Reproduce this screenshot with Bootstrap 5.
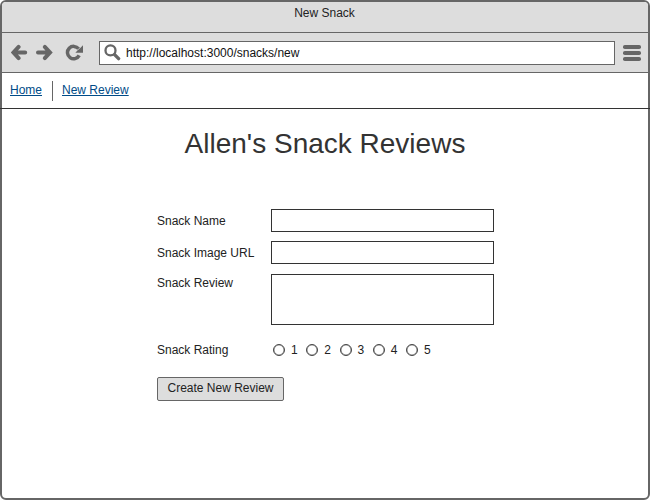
<!DOCTYPE html>
<html lang="en">
<head>
<meta charset="utf-8">
<meta name="viewport" content="width=device-width, initial-scale=1">
<title>New Snack</title>
<link href="https://cdn.jsdelivr.net/npm/bootstrap@5.3.0/dist/css/bootstrap.min.css" rel="stylesheet">
<style>
body{font-family:"Liberation Sans",Arial,sans-serif;font-size:12px;line-height:14px;color:#222;background:#fff}
.window{width:650px;height:500px;border:2px solid #666;border-radius:6px}
.titlebar{height:31px;padding:4px 1px 0 0;background:#ddd;border-bottom:1px solid #666;border-radius:4px 4px 0 0}
.toolbar{height:40px;background:#ddd;border-bottom:1px solid #666;padding:0 7.5px 0 9px}
.toolbar svg{display:block;flex:none}
.reload{margin-left:12px}
.address{width:516px;height:24px;border:1px solid #666;background:#fff;margin-left:16px;padding-left:4px}
.address input{font-size:12px;line-height:14px;color:#111;margin-left:5px;outline:0}
.site-nav{height:36px;border-bottom:1px solid #333;margin:0 -2px;padding:0 10px}
.site-nav a{color:#004b87;text-decoration:underline;text-underline-offset:1px;text-decoration-thickness:1px;margin-bottom:2px}
.divider{width:1px;height:20px;background:#666;margin:0 9px 0 10px}
h1{font-size:28px;line-height:32px;font-weight:400;margin:19px 0 0;color:#333}
.review-form{width:337px;margin:49px 0 0 155px}
.field{display:grid;grid-template-columns:114px 223px}
.field .form-control{height:23px;min-height:0;border:1px solid #333;border-radius:0;padding:2px 4px;font-size:12px;resize:none}
.field textarea.form-control{height:51px}
.field + .field{margin-top:9px}
.field.review-row{margin-top:10px}
.field.rating-row{margin-top:18px}
.review-row label{padding-top:2px}
.rating label{width:33.25px;padding-left:2px}
.rating input{appearance:none;width:12px;height:12px;margin:0 6px 0 0;border:1px solid #444;border-radius:50%;background:#fff;box-shadow:inset 0 0 0 .3px #444}
.rating input:checked{background:#444;box-shadow:inset 0 0 0 2px #fff}
.create{width:127px;height:24px;background:#ddd;border:1px solid #666;border-radius:2px;padding:0 0 2px;font-size:12px;line-height:14px;color:#222;margin-top:20px}
</style>
<script src="https://cdn.jsdelivr.net/npm/bootstrap@5.3.0/dist/js/bootstrap.bundle.min.js"></script>
</head>
<body>
<div class="window bg-white">
  <div class="titlebar text-center">New Snack</div>
  <div class="toolbar d-flex align-items-center">
    <svg width="17" height="17" viewBox="0 0 17 17" fill="none" stroke="#666" stroke-width="4" stroke-linecap="round"><path d="M7.6 2.9 2.4 8.5l5.2 5.6M3.5 8.5h10.7"/></svg>
    <svg class="ms-2" width="17" height="17" viewBox="0 0 17 17" fill="none" stroke="#666" stroke-width="4" stroke-linecap="round"><path d="m8.8 2.9 5.2 5.6-5.2 5.6M13 8.5H2"/></svg>
    <svg class="reload" width="18" height="17" viewBox="0 0 18 17"><path d="M13.6 4.8A6.2 6.2 0 1 0 14.2 11.4" fill="none" stroke="#666" stroke-width="3.5"/><path d="M18 1.2v7.5h-7.6l2-2.3 2.6-2.2z" fill="#666"/></svg>
    <div class="address d-flex align-items-center">
      <svg width="17" height="17" viewBox="0 0 17 17" fill="none" stroke="#666"><circle cx="6.5" cy="6.4" r="5" stroke-width="2.3"/><path d="m10.6 10.6 4 4" stroke-width="3.4" stroke-linecap="round"/></svg>
      <input class="border-0 p-0 flex-grow-1 bg-transparent" type="text" value="http://localhost:3000/snacks/new" aria-label="Address">
    </div>
    <svg class="ms-auto" width="18" height="16" viewBox="0 0 18 16" fill="#666"><rect width="18" height="4" rx="1.8"/><rect y="6" width="18" height="4" rx="1.8"/><rect y="12" width="18" height="4" rx="1.8"/></svg>
  </div>
  <nav class="site-nav d-flex align-items-center">
    <a href="#">Home</a><span class="divider"></span><a href="#">New Review</a>
  </nav>
  <h1 class="text-center">Allen's Snack Reviews</h1>
  <form class="review-form">
    <div class="field align-items-center"><label for="name">Snack Name</label><input class="form-control" id="name" type="text"></div>
    <div class="field align-items-center"><label for="image">Snack Image URL</label><input class="form-control" id="image" type="text"></div>
    <div class="field review-row"><label for="review">Snack Review</label><textarea class="form-control" id="review"></textarea></div>
    <div class="field rating-row align-items-center"><span>Snack Rating</span>
      <div class="rating d-flex">
        <label class="d-flex align-items-center"><input type="radio" name="rating">1</label>
        <label class="d-flex align-items-center"><input type="radio" name="rating">2</label>
        <label class="d-flex align-items-center"><input type="radio" name="rating">3</label>
        <label class="d-flex align-items-center"><input type="radio" name="rating">4</label>
        <label class="d-flex align-items-center"><input type="radio" name="rating">5</label>
      </div>
    </div>
    <button class="create d-block" type="button">Create New Review</button>
  </form>
</div>
</body>
</html>
